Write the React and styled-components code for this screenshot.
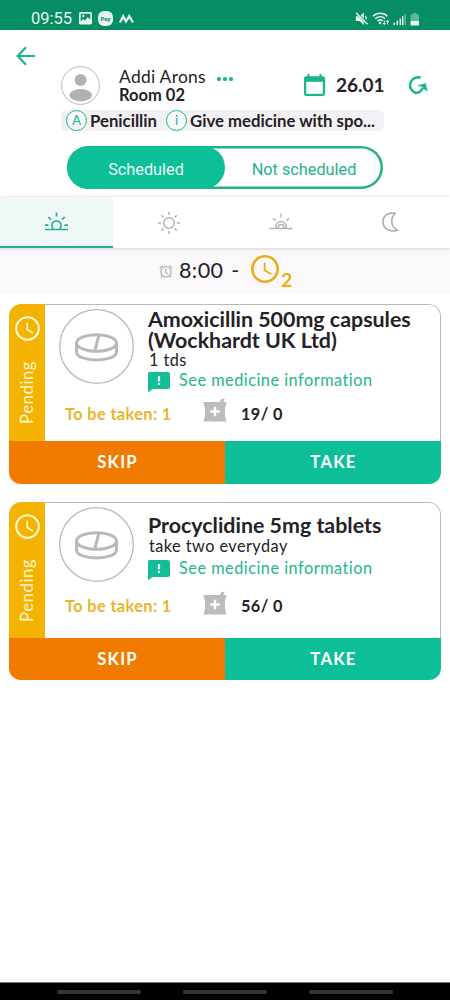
import styled, { createGlobalStyle } from 'styled-components';

const medicines = [
    { name: 'Amoxicillin 500mg capsules (Wockhardt UK Ltd)', dosage: '1 tds', toTake: 1, stock: '19/ 0' },
    { name: 'Procyclidine 5mg tablets', dosage: 'take two everyday', toTake: 1, stock: '56/ 0', compact: true },
];

const StatusIcons = () => (
    <svg width="66" height="16" viewBox="0 0 66 16" fill="#e4f5ee">
        <path d="M.8 5.200h2.400l5.600 5.600v3.400L4.600 10H.8zM5.600 4.300l3.200-2.800v6z" />
        <path d="M10.400 4.800c.8 1 .9 2.500.4 3.700" fill="none" stroke="#e4f5ee" strokeWidth="1.200" />
        <path d="M1 1.800 12.500 13.300" stroke="#e4f5ee" strokeWidth="1.500" />
        <g fill="none" stroke="#e4f5ee" strokeWidth="1.500">
            <path d="M18 5.200c4-4 10.500-4 14.500 0M20.300 7.700c3-2.700 7-2.700 9.900 0M22.500 10.100c1.700-1.500 3.700-1.500 5.200-.2" />
            <path d="M29.300 9.500v4M27.900 12l1.400 1.500 1.400-1.500M32.600 13.500v-4M31.200 11l1.400-1.500L34 11" strokeWidth="1" />
        </g>
        <circle cx="25" cy="12" r="1.200" />
        <path d="M38.500 11.700H40V14h-1.500zM41.500 9.800H43V14h-1.500zM44.500 7.500H46V14h-1.500z" />
        <path d="M47 5h1.500v9H47z" />
        <path d="M49.500 3H51v11h-1.500z" opacity=".4" />
        <path d="M55.500 3.500H58V2h3.500v1.500H64V10h-8.500z" opacity=".4" />
        <path d="M55.500 10H64v4.500h-8.500z" />
    </svg>
);

const PictureIcon = () => (
    <svg width="13" height="13" viewBox="0 0 13 13">
        <rect width="13" height="12.500" rx="1.500" fill="#e4f5ee" />
        <path d="M1.700 1.700h9.600v6L8.700 5 6 8.500 4 7 1.700 9.500z" fill="#068d63" />
        <circle cx="4.300" cy="4" r="1.200" fill="#e4f5ee" />
    </svg>
);

const WaveIcon = () => (
    <svg width="15" height="10" viewBox="0 0 15 10" fill="none" stroke="#e4f5ee" strokeWidth="2.300">
        <path d="M1 8.500 4.200 2.200 7 7.500 10.200 2.200 14 8.500" />
    </svg>
);

const BackIcon = () => (
    <svg width="20" height="20" viewBox="0 0 20 20" fill="none" stroke="#16b68e" strokeWidth="2.200">
        <path d="M19 10H2M10 1.300 1.700 10 10 18.700" />
    </svg>
);

const PersonIcon = () => (
    <svg width="39" height="39" viewBox="0 0 39 39">
        <circle cx="19.500" cy="19.500" r="18.900" fill="#fff" stroke="#b9b9b9" strokeWidth="1" />
        <circle cx="19.600" cy="14" r="6" fill="#b1b1b1" />
        <ellipse cx="19.700" cy="29.200" rx="11.200" ry="6.200" fill="#b1b1b1" />
    </svg>
);

const CalendarIcon = () => (
    <svg width="21" height="23" viewBox="0 0 21 23">
        <path d="M3.500 0h2v2.300h10V0h2v2.300h1.300A2.200 2.200 0 0 1 21 4.500v15.300a2.200 2.200 0 0 1-2.200 2.200H2.200A2.200 2.200 0 0 1 0 19.800V4.500a2.200 2.200 0 0 1 2.200-2.200h1.300z" fill="#19b58d" />
        <path d="M2.200 7.800h16.600v12H2.200z" fill="#fff" />
    </svg>
);

const RefreshIcon = () => (
    <svg width="23" height="21" viewBox="0 0 23 21">
        <path d="M14.700 2.800A8 8 0 1 0 9.400 17.900c3.500 0 6-2 7.600-5.200" fill="none" stroke="#19b58d" strokeWidth="2.500" />
        <path d="M11.300 10.700 19.500 8l2.200 8.500-3.600-2.300-1.300-2.300z" fill="#19b58d" />
    </svg>
);

const SunriseIcon = () => (
    <svg width="25" height="20" viewBox="0 0 25 20" fill="none" stroke="#2bb08c" strokeWidth="1.700">
        <path d="M1 17.500h23M1 13.200h3.500M20.500 13.200H24M12.500.5v4M4.300 5l2.600 2.700M20.700 5l-2.600 2.700M8.700 17v-.5c-1.600-3.500-.5-7.500 3.800-7.500s5.400 4 3.800 7.500v.5" />
    </svg>
);

const SunIcon = () => (
    <svg width="24" height="24" viewBox="0 0 24 24" fill="none" stroke="#b3b3b3" strokeWidth="1.500">
        <circle cx="12" cy="13" r="5.300" />
        <path d="M12 2v3.300M12 20.700V24M1 13h3.300M19.700 13H23M4.200 5.200l2.300 2.300M17.500 18.500l2.300 2.300M4.200 20.800l2.300-2.300M17.500 7.500l2.300-2.300" />
    </svg>
);

const SunsetIcon = () => (
    <svg width="24" height="18" viewBox="0 0 24 18" fill="none" stroke="#b3b3b3" strokeWidth="1.500">
        <path d="M.5 15.500h23M12 .5v4M4 5.200 6.600 8M20 5.200 17.400 8M6.700 15c0-8.700 10.600-8.700 10.600 0M9 15c0-4.700 6-4.700 6 0" />
    </svg>
);

const MoonIcon = () => (
    <svg width="25" height="20" viewBox="0 0 25 20" fill="none" stroke="#aaa" strokeWidth="1.600" strokeLinejoin="round">
        <path d="M14.300 1.500C6.500-.2 2 4.200 2 10c0 6.200 6 10.700 14.500 8.200C9.500 14.500 9 6.300 14.300 1.500z" />
    </svg>
);

const AlarmIcon = () => (
    <svg width="14" height="15" viewBox="0 0 14 15" fill="none" stroke="#b3b3b3" strokeWidth="1.200">
        <circle cx="7" cy="7.800" r="5.200" />
        <path d="M6.800 4.500v3.700l2.500 1.700M.7 4.300l3-2.800M13.300 4.300l-3-2.800M3.200 11.700l-1.300 1.700M10.800 11.700l1.300 1.700" />
    </svg>
);

const ClockIcon = ({ size, color, stroke }) => (
    <svg width={size} height={size} viewBox="0 0 28 28" fill="none" stroke={color} strokeWidth={stroke}>
        <circle cx="14" cy="14" r="12.700" />
        <path d="M13.700 7.500v7.700l6.500 4" strokeWidth="1.900" />
    </svg>
);

const PillIcon = () => (
    <svg width="75" height="75" viewBox="0 0 75 75" fill="none" stroke="#b9b9b9">
        <circle cx="37.500" cy="37.500" r="36.800" fill="#fff" strokeWidth="1.300" />
        <g strokeWidth="3">
            <ellipse cx="37.500" cy="34" rx="20" ry="8.300" />
            <path d="M17.500 34v9c0 10.500 40 10.500 40 0v-9M39.700 27 36 41" />
        </g>
    </svg>
);

const NoteIcon = () => (
    <svg width="22" height="21" viewBox="0 0 22 21">
        <path d="M1.500 0H20q2 0 2 2v13q0 2-2 2H4.500L0 20.500V1.500Q0 0 1.500 0z" fill="#13bd95" />
        <path d="M9.900 4.200h2.200v5H9.900zM9.900 10.700h2.200v2.200H9.900z" fill="#fff" />
    </svg>
);

const StockIcon = () => (
    <svg width="24" height="24" viewBox="0 0 24 24">
        <path d="M.5 4h16.200l1.500-2.800L21.700.5 20.500 4h3v1.500c-2.300 5.500-1.900 12 0 18H.5c1.900-6 2.300-12.500 0-18z" fill="#bcbcbd" />
        <path d="M12 8.800v9.500M7.200 13.500h9.600" stroke="#fff" strokeWidth="2.400" />
    </svg>
);

const MedicineCard = ({ item }) => {
    const { name, dosage, toTake, stock, compact } = item;

    return (
        <Card>
            <CardBody $compact={compact}>
                <Pending>
                    <ClockIcon size={25} color="#fff5cf" stroke={2.3} />
                    <span>Pending</span>
                </Pending>
                <Details>
                    <Summary>
                        <PillIcon />
                        <Info $compact={compact}>
                            <h4>{name}</h4>
                            <p>{dosage}</p>
                            <InfoLink $compact={compact}><NoteIcon />See medicine information</InfoLink>
                        </Info>
                    </Summary>
                    <Amounts $compact={compact}>
                        <span className="taken">To be taken: {toTake}</span>
                        <StockIcon />
                        <span className="stock">{stock}</span>
                    </Amounts>
                </Details>
            </CardBody>
            <Actions>
                <Action $color="#f17a00">SKIP</Action>
                <Action $color="#0dbf96">TAKE</Action>
            </Actions>
        </Card>
    )
}

export default function App() {
    return (
        <Screen>
            <GlobalStyle />
            <StatusBar>
                <span className="time">09:55</span>
                <PictureIcon />
                <PayBadge>Pay</PayBadge>
                <WaveIcon />
                <div className="right"><StatusIcons /></div>
            </StatusBar>
            <Header>
                <BackButton><BackIcon /></BackButton>
                <Patient>
                    <PersonIcon />
                    <PatientName>
                        <div className="name">Addi Arons<Dots><i /><i /><i /></Dots></div>
                        <div className="room">Room 02</div>
                    </PatientName>
                    <CalendarIcon />
                    <DateText>26.01</DateText>
                    <RefreshIcon />
                </Patient>
                <Notes>
                    <Letter>A</Letter>
                    <span className="allergy">Penicillin</span>
                    <Letter>i</Letter>
                    <span className="advice">Give medicine with spo...</span>
                </Notes>
                <Toggle>
                    <ToggleItem $active>Scheduled</ToggleItem>
                    <ToggleItem>Not scheduled</ToggleItem>
                </Toggle>
            </Header>
            <Tabs>
                <Tab $active><SunriseIcon /></Tab>
                <Tab><SunIcon /></Tab>
                <Tab><SunsetIcon /></Tab>
                <Tab><MoonIcon /></Tab>
            </Tabs>
            <TimeRow>
                <Alarm><AlarmIcon /></Alarm>
                <span className="hour">8:00 -</span>
                <ClockIcon size={28} color="#ecae18" stroke={2.6} />
                <span className="count">2</span>
            </TimeRow>
            <List>
                {medicines.map(item => <MedicineCard key={item.name} item={item} />)}
            </List>
            <NavBar><i /><i /><i /></NavBar>
        </Screen>
    )
}

const GlobalStyle = createGlobalStyle`
    body{
        margin:0;
        background:#fff;
    }
    *{
        box-sizing:border-box;
    }
    svg{
        display:block;
        flex-shrink:0;
    }
`

const Screen = styled.div`
    width:450px;
    height:1000px;
    display:flex;
    flex-direction:column;
    overflow:hidden;
    background:#fff;
    color:#242226;
    font-family:Lato, "Liberation Sans", sans-serif;
    white-space:nowrap;
`

const StatusBar = styled.div`
    height:30px;
    flex-shrink:0;
    display:flex;
    align-items:center;
    padding:7px 29px 0 31px;
    background:#068d63;
    .time{
        width:48px;
        padding-top:1px;
        color:#e4f5ee;
        font:16.5px/20px Roboto, sans-serif;
    }
    .right{
        margin-left:auto;
    }
`

const PayBadge = styled.span`
    width:15px;
    height:15px;
    margin:0 6px 0 6px;
    border-radius:6px;
    background:#e4f5ee;
    color:#068d63;
    font:bold 6px/15px Roboto, sans-serif;
    text-align:center;
`

const Header = styled.div`
    height:167px;
    flex-shrink:0;
    display:flex;
    flex-direction:column;
`

const BackButton = styled.div`
    height:36px;
    padding:16px 0 0 16px;
`

const Patient = styled.div`
    height:39px;
    display:flex;
    align-items:center;
    padding-left:61px;
`

const PatientName = styled.div`
    width:185px;
    margin-left:19px;
    .name{
        display:flex;
        align-items:center;
        font-size:17.4px;
        line-height:19px;
        letter-spacing:0.3px;
    }
    .room{
        font-size:16.5px;
        font-weight:700;
        line-height:18px;
    }
`

const Dots = styled.span`
    display:flex;
    gap:2.5px;
    margin:5px 0 0 11px;
    i{
        width:3.7px;
        height:3.7px;
        border-radius:50%;
        background:#19b58d;
    }
`

const DateText = styled.span`
    width:81px;
    padding-left:11px;
    font-size:19px;
    font-weight:700;
    line-height:20px;
    margin-top:-1px;
`

const Notes = styled.div`
    width:323px;
    height:21px;
    margin:5px 0 0 61px;
    padding-left:5px;
    display:flex;
    align-items:center;
    border-radius:5px;
    background:#f4f1f5;
    font-size:16.75px;
    font-weight:700;
    .allergy{
        width:79px;
        padding-left:3px;
    }
    .advice{
        padding-left:3px;
    }
`

const Letter = styled.span`
    width:21px;
    height:21px;
    flex-shrink:0;
    border:1px solid #19b58d;
    border-radius:50%;
    background:#f8f8fa;
    color:#19b58d;
    font-size:13.5px;
    font-weight:400;
    line-height:19px;
    text-align:center;
`

const Toggle = styled.div`
    width:316px;
    height:43px;
    margin:15px 0 0 67px;
    display:flex;
    border-radius:22px;
    box-shadow:inset 0 0 0 2.5px #25b18b;
`

const ToggleItem = styled.div`
    width:158px;
    padding-top:4px;
    border-radius:22px;
    background:${props => props.$active ? '#0dbf96' : 'transparent'};
    color:${props => props.$active ? '#e9fbf6' : '#25b18b'};
    font:16.3px/39px Roboto, sans-serif;
    text-align:center;
`

const Tabs = styled.div`
    height:51px;
    flex-shrink:0;
    display:grid;
    grid-template-columns:repeat(4, 1fr);
    position:relative;
    box-shadow:0 1px 3px rgba(0,0,0,0.16), 0 -1px 2px rgba(0,0,0,0.05);
`

const Tab = styled.div`
    display:flex;
    align-items:center;
    justify-content:center;
    background:${props => props.$active ? '#eff7f7' : '#fff'};
    border-bottom:2px solid ${props => props.$active ? '#1fb28b' : '#fff'};
`

const TimeRow = styled.div`
    height:46px;
    flex-shrink:0;
    display:flex;
    align-items:center;
    padding:0 0 4px 159px;
    background:#faf8fb;
    .hour{
        width:78px;
        padding:2px 0 0 6px;
        font-size:21.5px;
        letter-spacing:0.4px;
        word-spacing:2px;
    }
    .count{
        padding:22px 0 0 2px;
        color:#ecae18;
        font-size:19.5px;
        font-weight:700;
        line-height:20px;
    }
`

const Alarm = styled.div`
    padding-top:4px;
`

const List = styled.div`
    flex:1;
    display:flex;
    flex-direction:column;
    gap:18px;
    padding:10px 9px 0;
`

const Card = styled.div`
    border-radius:12px;
    overflow:hidden;
`

const CardBody = styled.div`
    height:${props => props.$compact ? 136 : 137}px;
    display:flex;
    border:1px solid #b9b9b9;
    border-width:1px 1px 0 0;
    border-radius:12px 12px 0 0;
`

const Pending = styled.div`
    width:36px;
    flex-shrink:0;
    display:flex;
    flex-direction:column;
    align-items:center;
    margin-top:-1px;
    padding-top:12px;
    border-radius:12px 0 0 0;
    background:#f3b300;
    color:#fff5cf;
    span{
        margin-top:20px;
        writing-mode:vertical-rl;
        transform:rotate(180deg);
        font-size:16.8px;
        line-height:20px;
        letter-spacing:0.5px;
    }
`

const Details = styled.div`
    flex:1;
    padding-top:4px;
`

const Summary = styled.div`
    height:85px;
    display:flex;
    padding-left:14px;
`

const Info = styled.div`
    width:280px;
    margin-left:14px;
    padding-top:${props => props.$compact ? 8 : 0}px;
    white-space:normal;
    h4{
        margin:0;
        font-size:21.4px;
        font-weight:700;
        line-height:21px;
    }
    p{
        margin:0 0 0 1px;
        font-size:16.3px;
        line-height:${props => props.$compact ? 19 : 18}px;
        letter-spacing:0.45px;
    }
`

const InfoLink = styled.div`
    display:flex;
    align-items:center;
    gap:9px;
    margin-top:${props => props.$compact ? 0 : -2}px;
    color:#24b58d;
    font-size:16.3px;
    line-height:24px;
    letter-spacing:0.5px;
    svg{
        margin-top:5px;
    }
`

const Amounts = styled.div`
    display:flex;
    align-items:center;
    height:24px;
    margin-top:${props => props.$compact ? 2 : 7}px;
    padding-left:20px;
    font-size:16.3px;
    font-weight:700;
    letter-spacing:0.4px;
    .taken{
        width:138px;
        color:#e8b32c;
    }
    .stock{
        margin-left:14px;
    }
    svg{
        margin-top:-6px;
    }
`

const Actions = styled.div`
    display:grid;
    grid-template-columns:1fr 1fr;
    height:42.5px;
`

const Action = styled.div`
    padding-left:1px;
    background:${props => props.$color};
    color:#fff;
    font-size:16.7px;
    font-weight:700;
    line-height:42px;
    letter-spacing:1.2px;
    text-align:center;
`

const NavBar = styled.div`
    height:18px;
    flex-shrink:0;
    display:flex;
    gap:42px;
    padding:7px 0 0 57px;
    border-top:1px solid #777;
    background:#020003;
    i{
        width:84px;
        height:4px;
        border-radius:2px;
        background:#38343a;
    }
`
